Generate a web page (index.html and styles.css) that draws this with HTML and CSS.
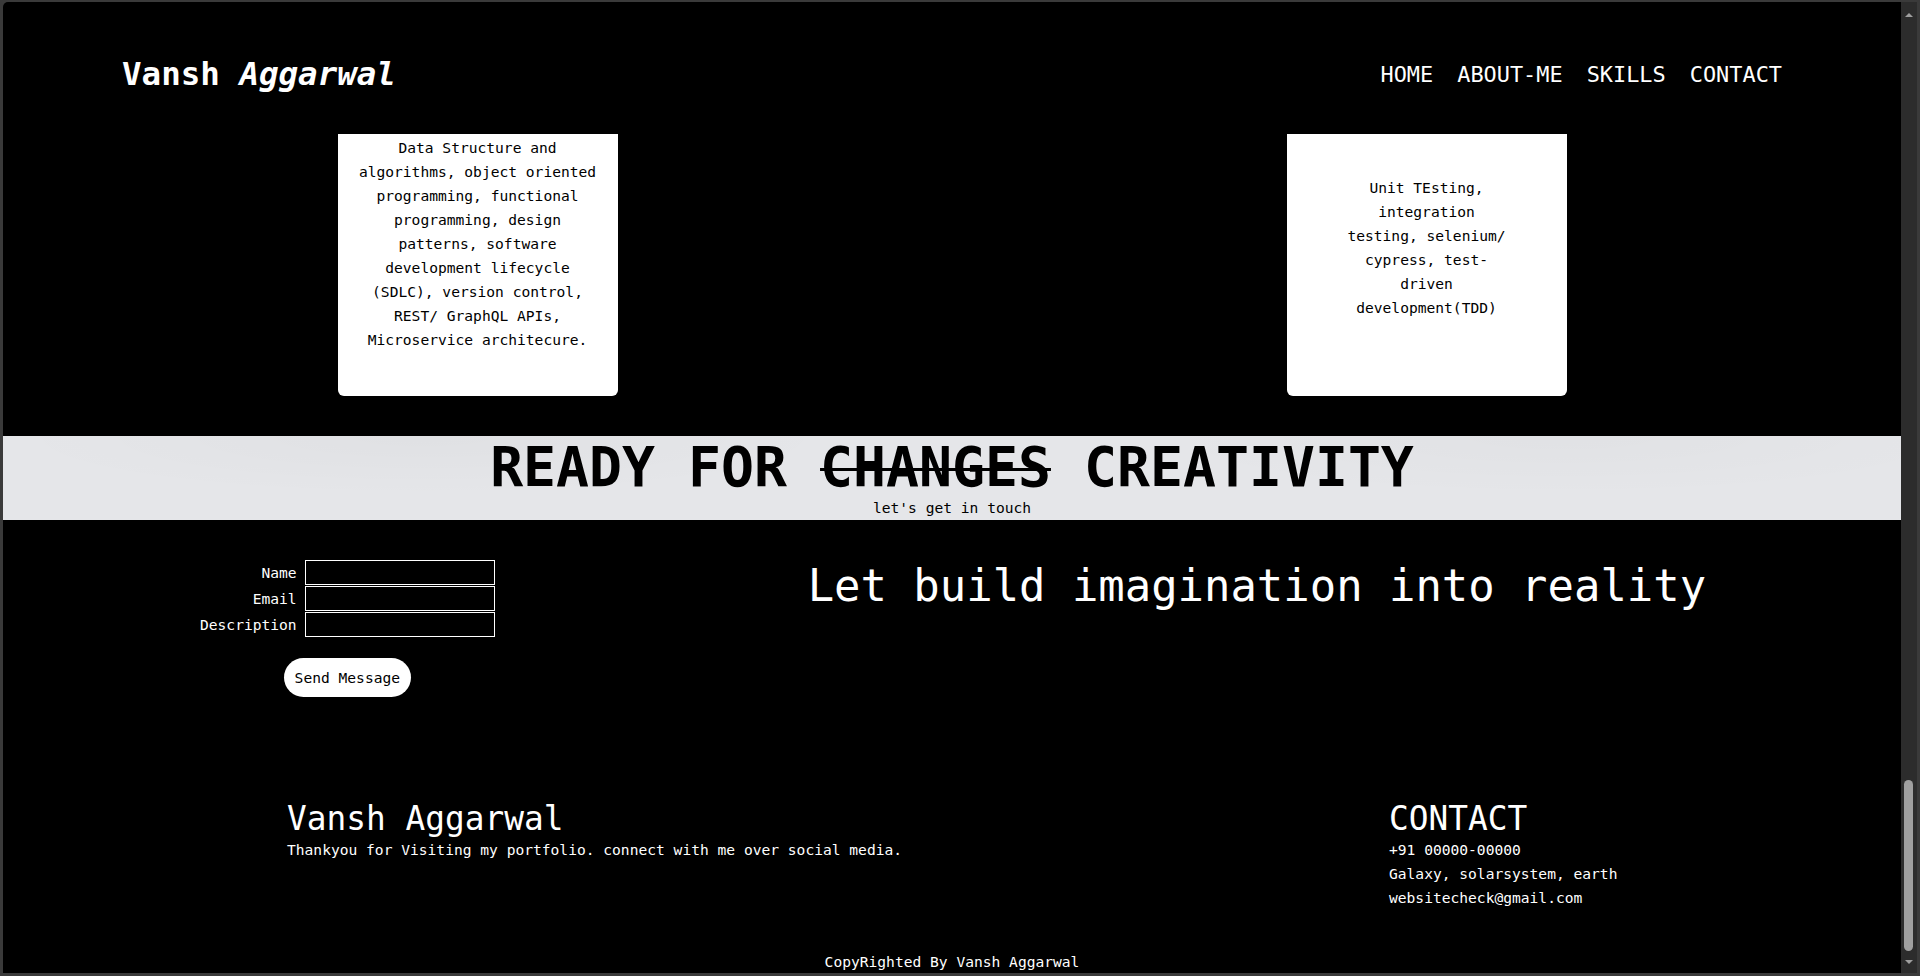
FILE: index.html
```html
<!DOCTYPE html>
<html lang="en">
<head>
<meta charset="utf-8">
<title>Vansh Aggarwal</title>
<link rel="stylesheet" href="styles.css">
</head>
<body>
<div class="window">
  <div class="page">
    <header class="topbar">
      <div class="brand">Vansh <em>Aggarwal</em></div>
      <nav class="nav">
        <a href="#home">HOME</a>
        <a href="#about">ABOUT-ME</a>
        <a href="#skills">SKILLS</a>
        <a href="#contact">CONTACT</a>
      </nav>
    </header>

    <section class="skills" id="skills">
      <div class="card card-left">
        <p>Data Structure and algorithms, object oriented programming, functional programming, design patterns, software development lifecycle (SDLC), version control, REST/ GraphQL APIs, Microservice architecure.</p>
      </div>
      <div class="card card-right">
        <p>Unit TEsting, integration testing, selenium/ cypress, test-driven development(TDD)</p>
      </div>
    </section>

    <section class="banner">
      <h1>READY FOR <s>CHANGES</s> CREATIVITY</h1>
      <p>let's get in touch</p>
    </section>

    <section class="contact" id="contact">
      <form class="form">
        <div class="fields">
          <label for="name">Name</label><input id="name" type="text">
          <label for="email">Email</label><input id="email" type="text">
          <label for="desc">Description</label><input id="desc" type="text">
        </div>
        <button type="button" class="send">Send Message</button>
      </form>
      <h2 class="tagline">Let build imagination into reality</h2>
    </section>

    <footer class="footer">
      <div class="foot-cols">
        <div class="foot-about">
          <h3>Vansh Aggarwal</h3>
          <p>Thankyou for Visiting my portfolio. connect with me over social media.</p>
        </div>
        <div class="foot-contact">
          <h3>CONTACT</h3>
          <p>+91 00000-00000</p>
          <p>Galaxy, solarsystem, earth</p>
          <p>websitecheck@gmail.com</p>
        </div>
      </div>
      <p class="copy">CopyRighted By Vansh Aggarwal</p>
    </footer>
  </div>

  <div class="scrollbar">
    <div class="sb-up"><span class="tri-up"></span></div>
    <div class="sb-track"><span class="sb-thumb"></span></div>
    <div class="sb-down"><span class="tri-down"></span></div>
  </div>
</div>
</body>
</html>
```

FILE: styles.css
```css
html, body {
  margin: 0;
  padding: 0;
}

body {
  background: #3a3a3a;
  font-family: "DejaVu Sans Mono", "Liberation Mono", monospace;
  overflow: hidden;
}

.window {
  display: flex;
  height: 976px;
  box-sizing: border-box;
  padding: 2px 3px 3px 3px;
}

.page {
  width: 1898px;
  height: 971px;
  background: #000;
  color: #fff;
  overflow: hidden;
  border-top-left-radius: 5px;
  display: flex;
  flex-direction: column;
  flex-shrink: 0;
}

/* header */
.topbar {
  height: 132px;
  flex-shrink: 0;
  box-sizing: border-box;
  padding: 12px 119px 0 119px;
  display: flex;
  justify-content: space-between;
  align-items: center;
}

.brand {
  font-size: 32.5px;
  line-height: 40px;
  font-weight: bold;
  color: #fff;
}

.brand em {
  font-style: italic;
}

.nav {
  display: flex;
  gap: 24px;
  margin-top: 2px;
  font-size: 21.9px;
  line-height: 30px;
}

.nav a {
  color: #fff;
  text-decoration: none;
}

/* skills cards */
.skills {
  height: 302px;
  flex-shrink: 0;
  display: grid;
  grid-template-columns: 1fr 1fr;
  justify-items: center;
  align-items: start;
}

.card {
  width: 280px;
  height: 262px;
  box-sizing: border-box;
  background: #fff;
  color: #000;
  border-radius: 0 0 6px 6px;
  text-align: center;
  font-size: 14.6px;
  line-height: 24px;
}

.card p {
  margin: 0;
}

.card-left {
  padding: 2px 20px 0;
}

.card-right {
  padding: 42px 56px 0;
}

/* banner */
.banner {
  height: 84px;
  flex-shrink: 0;
  box-sizing: border-box;
  padding-top: 1px;
  background:
    radial-gradient(ellipse 420px 60px at 420px 0px, rgba(0, 0, 0, 0.025), transparent),
    radial-gradient(ellipse 420px 60px at 1560px 0px, rgba(0, 0, 0, 0.02), transparent),
    #e5e6e9;
  color: #000;
  text-align: center;
}

.banner h1 {
  margin: 0;
  font-size: 54.8px;
  line-height: 60px;
  font-weight: bold;
}

.banner s {
  text-decoration-thickness: 3px;
}

.banner p {
  margin: 2px 0 0;
  font-size: 14.6px;
  line-height: 17px;
}

/* contact */
.contact {
  flex-shrink: 0;
  display: flex;
  align-items: flex-start;
  padding: 40px 0 0 197px;
}

.form {
  display: flex;
  flex-direction: column;
  align-items: center;
  margin: 0;
}

.fields {
  display: grid;
  grid-template-columns: auto 190px;
  column-gap: 8px;
  row-gap: 1px;
}

.fields label {
  font-size: 14.6px;
  line-height: 25px;
  text-align: right;
  color: #fff;
}

.fields input {
  width: 190px;
  height: 25px;
  box-sizing: border-box;
  margin: 0;
  padding: 0 4px;
  border: 1px solid #fff;
  background: #000;
  color: #fff;
  font-family: inherit;
}

.send {
  margin-top: 21px;
  height: 39px;
  padding: 0 11px;
  border: none;
  border-radius: 20px;
  background: #fff;
  color: #000;
  font-family: "DejaVu Sans Mono", "Liberation Mono", monospace;
  font-size: 14.6px;
  line-height: 17px;
}

.tagline {
  margin: 0 0 0 313px;
  font-size: 43.9px;
  line-height: normal;
  font-weight: normal;
  white-space: nowrap;
  color: #fff;
}

/* footer */
.footer {
  flex-shrink: 0;
  padding-top: 103px;
}

.foot-cols {
  display: grid;
  grid-template-columns: 1102px auto;
  padding-left: 284px;
}

.footer h3 {
  margin: 0;
  font-size: 32.8px;
  line-height: 38px;
  font-weight: normal;
}

.footer p {
  margin: 0;
  font-size: 14.6px;
  line-height: 24px;
}

.footer .copy {
  margin-top: 39.5px;
  text-align: center;
}

/* window scrollbar */
.scrollbar {
  width: 16px;
  height: 971px;
  background: #2c2c2c;
  display: flex;
  flex-direction: column;
  flex-shrink: 0;
}

.sb-up {
  height: 26px;
  display: flex;
  align-items: center;
  justify-content: center;
}

.sb-track {
  flex: 1;
  display: flex;
  flex-direction: column;
  justify-content: flex-end;
}

.sb-thumb {
  display: block;
  width: 9px;
  height: 171px;
  margin-left: 3px;
  border-radius: 4.5px;
  background: #9f9f9f;
}

.sb-down {
  height: 22px;
  display: flex;
  align-items: center;
  justify-content: center;
}

.tri-up {
  width: 0;
  height: 0;
  border-left: 4px solid transparent;
  border-right: 4px solid transparent;
  border-bottom: 4px solid #9f9f9f;
}

.tri-down {
  width: 0;
  height: 0;
  border-left: 4px solid transparent;
  border-right: 4px solid transparent;
  border-top: 4px solid #9f9f9f;
}
```
